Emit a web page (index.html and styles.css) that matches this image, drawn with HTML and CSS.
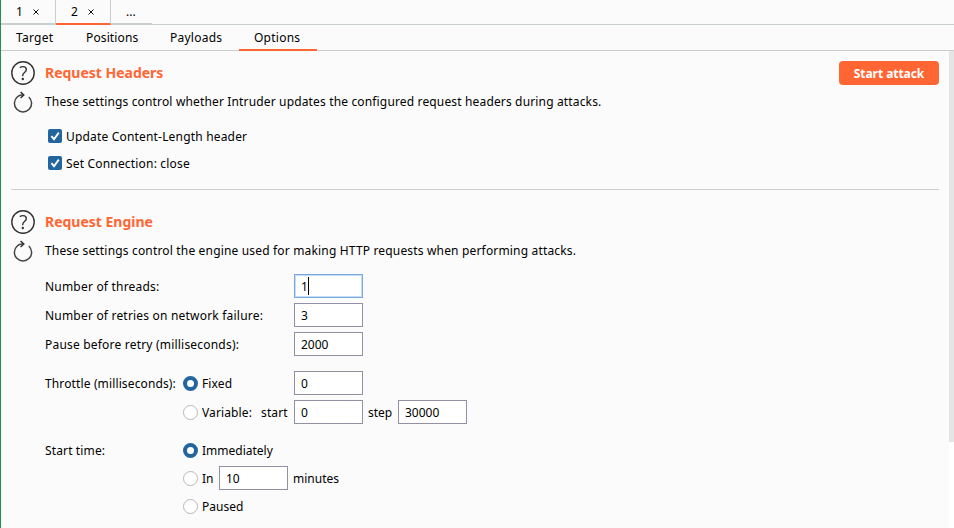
FILE: index.html
```html
<!DOCTYPE html>
<html lang="en">
<head>
<meta charset="utf-8">
<title>Intruder</title>
<link rel="stylesheet" href="styles.css">
</head>
<body>
<svg class="defs" width="0" height="0">
  <symbol id="help" viewBox="0 0 24 24">
    <circle cx="12" cy="12" r="11.2" fill="none" stroke="#333" stroke-width="1.4"/>
    <path d="M8.8 6.6C9.8 5.9 10.9 5.6 12 5.6c2.1 0 3.3 1.1 3.3 2.8 0 1.5-.8 2.3-1.8 3.1-1.2 1-1.8 1.6-1.8 2.9v.9" fill="none" stroke="#333" stroke-width="1.4"/>
    <circle cx="11.8" cy="18" r="1.2" fill="#333"/>
  </symbol>
  <symbol id="reset" viewBox="0 0 20 22">
    <path d="M10.8 4.1C8 3.7 5.8 4.3 4.2 6A8.6 8.6 0 1 0 15.8 6" fill="none" stroke="#444" stroke-width="1.5"/>
    <path d="M7.6 1l3.2 3.1-3.2 2.9" fill="none" stroke="#333" stroke-width="1.5"/>
  </symbol>
  <symbol id="check" viewBox="0 0 14 14">
    <path d="M3.4 7.2l2.6 3L10.8 3.6" fill="none" stroke="#fff" stroke-width="1.9"/>
  </symbol>
</svg>
<div class="app">
  <nav class="tabs">
    <div class="tab first"><span>1</span><svg class="close" viewBox="0 0 6 6"><path d="M.5.5l5 5M5.5.5l-5 5"/></svg></div>
    <div class="tab active"><span>2</span><svg class="close" viewBox="0 0 6 6"><path d="M.5.5l5 5M5.5.5l-5 5"/></svg></div>
    <div class="tab more">...</div>
  </nav>
  <nav class="subtabs">
    <div class="subtab target">Target</div>
    <div class="subtab positions">Positions</div>
    <div class="subtab payloads">Payloads</div>
    <div class="subtab options active">Options</div>
  </nav>
  <div class="view">
    <main class="content">
      <section class="section headers">
        <div class="icons"><svg class="help"><use href="#help"/></svg><svg class="reset"><use href="#reset"/></svg></div>
        <div class="body">
          <div class="heading"><h2>Request Headers</h2><button class="attack"><span>Start attack</span></button></div>
          <p>These settings control whether Intruder updates the configured request headers during attacks.</p>
          <div class="checks">
            <label class="check"><svg class="box"><use href="#check"/></svg><span>Update Content-Length header</span></label>
            <label class="check"><svg class="box"><use href="#check"/></svg><span>Set Connection: close</span></label>
          </div>
        </div>
      </section>
      <section class="section engine">
        <div class="icons"><svg class="help"><use href="#help"/></svg><svg class="reset"><use href="#reset"/></svg></div>
        <div class="body">
          <div class="heading"><h2>Request Engine</h2></div>
          <p class="about">These settings control the engine used for making HTTP requests when performing attacks.</p>
          <div class="fields">
            <div class="row"><span class="label wide">Number of threads:</span><div class="input focus">1<i class="caret"></i></div></div>
            <div class="row"><span class="label wide">Number of retries on network failure:</span><div class="input">3</div></div>
            <div class="row"><span class="label wide">Pause before retry (milliseconds):</span><div class="input">2000</div></div>
          </div>
          <div class="fields throttle">
            <div class="row"><span class="label">Throttle (milliseconds):</span><i class="radio on"></i><span class="choice">Fixed</span><div class="input">0</div></div>
            <div class="row"><span class="label"></span><i class="radio"></i><span class="choice"><span>Variable:</span><span class="start">start</span></span><div class="input">0</div><span class="step">step</span><div class="input">30000</div></div>
          </div>
          <div class="fields time">
            <div class="row"><span class="label">Start time:</span><i class="radio on"></i><span>Immediately</span></div>
            <div class="row"><span class="label"></span><i class="radio"></i><span class="in">In</span><div class="input">10</div><span class="minutes">minutes</span></div>
            <div class="row"><span class="label"></span><i class="radio"></i><span>Paused</span></div>
          </div>
        </div>
      </section>
    </main>
    <div class="scrollbar"><div class="thumb"></div></div>
  </div>
</div>
</body>
</html>
```
FILE: styles.css
```css
* { box-sizing: border-box; }
body { margin: 0; overflow: hidden; background: #fbfbfb; color: #000; font: 12px/16px "Noto Sans", "Open Sans", sans-serif; white-space: nowrap; }
.defs { display: block; }
.app { width: 954px; height: 528px; border-left: 1px solid #1f9254; display: flex; flex-direction: column; overflow: hidden; }
.tabs { display: flex; height: 25px; box-shadow: inset 0 -1px #c8cfcc; }
.tab { height: 25px; padding-top: 4px; border-right: 1px solid #c8cfcc; border-bottom: 2px solid #c8cfcc; display: flex; align-items: flex-start; }
.first { width: 55px; padding-left: 15px; }
.tab.active { width: 55px; padding-left: 15px; border-bottom-color: #ff6633; }
.more { width: 41px; padding-left: 15px; border-right: 0; border-bottom-width: 1px; box-shadow: inset 0 -1px #c8cfcc; }
.close { width: 6px; height: 6px; margin: 5px 0 0 10px; stroke: #111; stroke-width: 1; fill: none; }
.subtabs { display: flex; height: 26px; box-shadow: inset 0 -1px #c8cfcc; letter-spacing: .25px; }
.subtab { height: 26px; padding: 5px 0 0 15px; }
.target { width: 70px; }
.positions { width: 84px; letter-spacing: .12px; }
.payloads { width: 84px; }
.options { width: 78px; }
.subtab.active { border-bottom: 2px solid #ff6633; }
.view { display: flex; flex: 1; min-height: 0; }
.content { width: 948px; padding: 0 10px; overflow: hidden; }
.section { display: flex; padding-top: 10px; }
.headers { height: 139px; border-bottom: 1px solid #cfcfcf; }
.engine { padding-top: 20px; }
.icons { width: 34px; display: flex; flex-direction: column; flex: none; }
.help { width: 24px; height: 24px; display: block; }
.reset { width: 20px; height: 22px; margin: 6px 0 0 2px; }
.body { flex: 1; }
.heading { display: flex; justify-content: space-between; align-items: center; height: 24px; }
h2 { margin: 0; padding-bottom: 1px; font-size: 14px; line-height: 18px; font-weight: 700; color: #ff6633; letter-spacing: -.01px; }
.attack { width: 100px; height: 24px; border: 0; border-radius: 4px; padding: 1px 0 0; background: #ff6633; color: #fff; font: 700 12px/16px "Noto Sans", sans-serif; letter-spacing: -.05px; }
p { margin: 9px 0 0; height: 15px; letter-spacing: .152px; }
.about { letter-spacing: .17px; }
.checks { margin: 14px 0 0 3px; letter-spacing: .18px; }
.check { display: flex; height: 27px; align-items: flex-start; padding-top: 6px; }
.box { width: 14px; height: 14px; border-radius: 2px; background: #23659f; margin: 0 4px 0 0; }
.fields { margin-top: 16px; display: grid; gap: 5px; }
.throttle { margin-top: 15px; }
.row { display: flex; align-items: center; height: 24px; }
.row > span { padding-top: 2px; }
.label { width: 138px; flex: none; letter-spacing: .13px; }
.label.wide { width: 249px; letter-spacing: .2px; }
.input { width: 69px; height: 24px; border: 1px solid #9390a4; background: #fff; padding: 2px 6px 0; display: flex; align-items: center; }
.focus { border-color: #7aa9de; box-shadow: inset 0 0 0 1px #c5dcf7; }
.caret { width: 1px; height: 18px; margin-top: -2px; background: #000; }
.radio { width: 15px; height: 15px; flex: none; align-self: flex-start; border: 1px solid #b8b8b8; border-radius: 50%; background: #fff; margin: 5px 4px 0 0; }
.radio.on { border: 4px solid #23659f; }
.choice { width: 92px; display: flex; letter-spacing: .12px; }
.start { margin-left: 9px; }
.step { width: 35px; padding-left: 5px; }
.time { gap: 4px; margin-top: 14px; }
.in { width: 17px; }
.minutes { margin-left: 5px; }
.scrollbar { width: 5px; background: #fff; }
.thumb { height: 391px; background: #e5e5e5; }
```
